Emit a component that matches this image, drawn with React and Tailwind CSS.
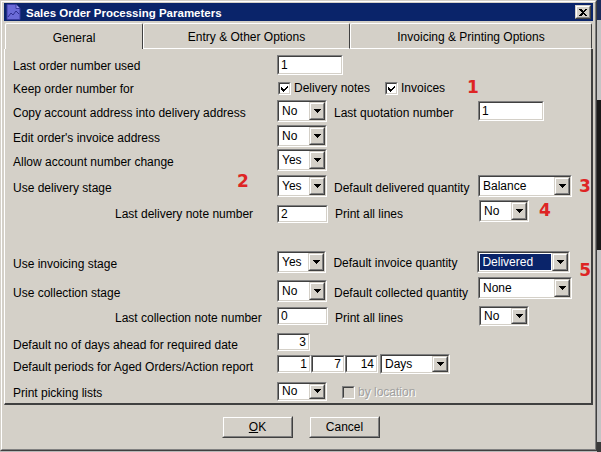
import React from "react";

const SUNKEN_OUT = "border border-t-[#808080] border-l-[#808080] border-r-white border-b-white";
const SUNKEN_IN = "border border-t-[#404040] border-l-[#404040] border-r-[#d4d0c8] border-b-[#d4d0c8]";
const RAISED_OUT = "border border-t-[#d4d0c8] border-l-[#d4d0c8] border-r-[#404040] border-b-[#404040]";
const RAISED_IN = "border border-t-white border-l-white border-r-[#808080] border-b-[#808080]";

function Arrow() {
  return (
    <svg width="7" height="4" viewBox="0 0 7 4" shapeRendering="crispEdges">
      <path d="M0 0H7L3.5 4Z" fill="#000" />
    </svg>
  );
}

function Field({ w, value, right, h = "h-[19px]" }) {
  return (
    <div className={`${SUNKEN_OUT} bg-white ${h} ${w}`}>
      <div className={`${SUNKEN_IN} h-full flex items-center px-[2px] ${right ? "justify-end" : ""}`}>
        <span className="leading-[14px]">{value}</span>
      </div>
    </div>
  );
}

function Combo({ w, h = "h-[22px]", value, selected, extra = "" }) {
  return (
    <div className={`${SUNKEN_OUT} bg-white ${w} ${h} ${extra}`}>
      <div className={`${SUNKEN_IN} h-full flex`}>
        <div className="flex-1 flex min-w-0 p-[1px]">
          <div className={`flex-1 flex items-center px-[2px] leading-[14px] ${selected ? "bg-[#0a246a] text-white" : ""}`}>
            {value}
          </div>
        </div>
        <div className={`${RAISED_OUT} w-[16px] h-full`}>
          <div className={`${RAISED_IN} h-full flex items-center justify-center bg-[#d4d0c8]`}>
            <Arrow />
          </div>
        </div>
      </div>
    </div>
  );
}

function Check({ checked, disabled }) {
  return (
    <div className={`${SUNKEN_OUT} w-[13px] h-[13px] shrink-0 ${disabled ? "bg-[#d4d0c8]" : "bg-white"}`}>
      <div className={`${SUNKEN_IN} w-full h-full flex items-center justify-center`}>
        {checked && (
          <svg width="7" height="7" viewBox="0 0 7 7" shapeRendering="crispEdges">
            <path d="M0 2L2.5 4.5L7 0V2.5L2.5 7L0 4.5Z" fill="#000" />
          </svg>
        )}
      </div>
    </div>
  );
}

function Red({ children, extra = "" }) {
  return (
    <span className={`text-[#de2424] font-bold text-[17px] leading-[17px] font-['DejaVu_Sans',sans-serif] ${extra}`}>
      {children}
    </span>
  );
}

function Tab({ label, w, selected }) {
  return (
    <div
      className={`${w} h-[26px] border-t border-l border-t-white border-l-white border-r border-r-[#404040] rounded-tl-[2px] rounded-tr-[2px] flex items-center justify-center ${
        selected ? "" : "border-b border-b-white"
      }`}
    >
      <span className="mt-[2px]">{label}</span>
    </div>
  );
}

function Label({ children, extra = "" }) {
  return <div className={`w-[264px] shrink-0 flex items-center ${extra}`}>{children}</div>;
}

function Label2({ children, extra = "" }) {
  return <div className={`w-[144px] ml-[7px] shrink-0 flex items-center ${extra}`}>{children}</div>;
}

function Button({ children }) {
  return (
    <div className={`${RAISED_OUT} w-[71px] h-[22px] bg-[#d4d0c8]`}>
      <div className={`${RAISED_IN} h-full flex items-center justify-center`}>{children}</div>
    </div>
  );
}

export default function App() {
  return (
    <div className="w-[601px] h-[452px] flex bg-[#b8b8b8] overflow-hidden font-['Liberation_Sans',Arial,sans-serif] text-[12px] text-black">
      {/* window */}
      <div className="w-[597px] h-[451px] shrink-0 border border-t-[#d4d0c8] border-l-[#d4d0c8] border-r-[#404040] border-b-[#404040] bg-[#d4d0c8]">
        <div className="h-full border border-t-white border-l-white border-r-[#808080] border-b-[#808080] pt-[1px] px-[2px] flex flex-col">
          {/* title bar */}
          <div className="h-[18px] bg-[#0a246a] flex items-center pl-[2px] pr-[2px]">
            <svg width="15" height="16" viewBox="0 0 15 16" className="shrink-0">
              <path d="M1 0.5H10L14 4.5V15.5H1Z" fill="#6b6bd8" stroke="#3a3aa0" />
              <path d="M10 0.5V4.5H14" fill="#9a9af0" stroke="#3a3aa0" />
              <path d="M2 13L5 9L7 11L10 7L13 10" fill="none" stroke="#2f2f90" strokeWidth="1" />
            </svg>
            <span className="ml-[5px] mt-[1px] text-white font-bold text-[11.5px] leading-[14px] flex-1">
              Sales Order Processing Parameters
            </span>
            <div className={`${RAISED_OUT} w-[16px] h-[14px] bg-[#d4d0c8]`}>
              <div className={`${RAISED_IN} h-full flex items-center justify-center`}>
                <svg width="8" height="7" viewBox="0 0 8 7" shapeRendering="crispEdges">
                  <path d="M0 0H2L4 2L6 0H8L5 3.5L8 7H6L4 5L2 7H0L3 3.5Z" fill="#000" />
                </svg>
              </div>
            </div>
          </div>

          {/* tabs */}
          <div className="flex mt-[2px] pl-[1px]">
            <Tab w="w-[138px]" label="General" selected />
            <Tab w="w-[207px]" label="Entry & Other Options" />
            <Tab w="w-[242px]" label="Invoicing & Printing Options" />
          </div>

          {/* panel */}
          <div className="h-[356px] border-l border-l-white border-r-2 border-r-[#404040] border-b-2 border-b-[#404040] pl-[8px] flex flex-col">
            {/* R1 */}
            <div className="flex h-[22px] mt-[5px] items-center">
              <Label extra="mt-[2px]">Last order number used</Label>
              <Field w="w-[66px]" h="h-[20px]" value="1" />
            </div>
            {/* R2 */}
            <div className="flex h-[22px] mt-[1px] items-center">
              <Label extra="mt-[1px]">Keep order number for</Label>
              <div className="flex items-center ml-[1px]">
                <Check checked />
                <span className="ml-[3px]">Delivery notes</span>
                <div className="ml-[15px]">
                  <Check checked />
                </div>
                <span className="ml-[3px]">Invoices</span>
                <Red extra="ml-[22px] mt-[-1px]">1</Red>
              </div>
            </div>
            {/* R3 */}
            <div className="flex h-[22px] mt-[1px] items-center">
              <Label extra="mt-[4px]">Copy account address into delivery address</Label>
              <Combo w="w-[50px]" value="No" />
              <Label2 extra="mt-[3px]">Last quotation number</Label2>
              <Field w="w-[66px]" h="h-[20px]" value="1" />
            </div>
            {/* R4 */}
            <div className="flex h-[22px] mt-[3px] items-center">
              <Label extra="mt-[4px]">Edit order's invoice address</Label>
              <Combo w="w-[50px]" value="No" />
            </div>
            {/* R5 */}
            <div className="flex h-[22px] mt-[2px] items-center">
              <Label extra="mt-[4px]">Allow account number change</Label>
              <Combo w="w-[50px]" value="Yes" />
            </div>
            {/* R6 */}
            <div className="flex h-[22px] mt-[4px] items-center">
              <Label extra="relative mt-[4px]">
                Use delivery stage
                <Red extra="absolute left-[224px] top-[-6px]">2</Red>
              </Label>
              <Combo w="w-[50px]" value="Yes" />
              <Label2 extra="mt-[3px]">Default delivered quantity</Label2>
              <Combo w="w-[94px]" value="Balance" />
              <Red extra="ml-[7px] mt-[1px]">3</Red>
            </div>
            {/* R7 */}
            <div className="flex h-[22px] mt-[4px] items-end">
              <Label extra="pl-[102px] h-[19px]">Last delivery note number</Label>
              <Field w="w-[51px]" h="h-[18px]" value="2" />
              <div className="h-[19px] flex">
                <Label2>Print all lines</Label2>
              </div>
              <Combo w="w-[50px]" value="No" extra="self-start -mt-[1px]" />
              <Red extra="ml-[10px] self-center -mt-[4px]">4</Red>
            </div>
            {/* R8 */}
            <div className="flex h-[22px] mt-[28px] items-center">
              <Label extra="mt-[3px]">Use invoicing stage</Label>
              <Combo w="w-[50px]" value="Yes" />
              <Label2 extra="mt-[2px]">Default invoice quantity</Label2>
              <Combo w="w-[94px]" value="Delivered" selected />
              <Red extra="ml-[9px] mt-[16px]">5</Red>
            </div>
            {/* R9 */}
            <div className="flex h-[22px] mt-[6px] items-center">
              <Label extra="mt-[6px]">Use collection stage</Label>
              <Combo w="w-[50px]" value="No" extra="mt-[2px]" />
              <Label2>
                <span className="mt-[5px]">Default collected quantity</span>
              </Label2>
              <Combo w="w-[94px]" value="None" extra="-mt-[4px]" />
            </div>
            {/* R10 */}
            <div className="flex h-[22px] mt-[4px] items-center">
              <Label extra="pl-[102px] mt-[4px]">Last collection note number</Label>
              <Field w="w-[51px]" h="h-[18px]" value="0" />
              <Label2 extra="mt-[3px]">Print all lines</Label2>
              <Combo w="w-[50px]" h="h-[20px]" value="No" />
            </div>
            {/* R11 */}
            <div className="flex h-[22px] mt-[4px] items-center">
              <Label extra="mt-[5px]">Default no of days ahead for required date</Label>
              <Field w="w-[33px]" h="h-[18px]" value="3" right />
            </div>
            {/* R12 */}
            <div className="flex h-[22px] mt-0 items-center">
              <Label extra="mt-[5px]">Default periods for Aged Orders/Action report</Label>
              <Field w="w-[34px]" h="h-[18px]" value="1" right />
              <Field w="w-[34px]" h="h-[18px]" value="7" right />
              <Field w="w-[33px]" h="h-[18px]" value="14" right />
              <Combo w="w-[70px]" h="h-[20px]" value="Days" extra="ml-[2px]" />
            </div>
            {/* R13 */}
            <div className="flex h-[22px] mt-[5px] items-center">
              <Label extra="mt-[3px]">Print picking lists</Label>
              <Combo w="w-[50px]" h="h-[19px]" value="No" />
              <div className="ml-[15px] flex items-center mt-[2px]">
                <Check disabled />
                <span className="ml-[3px] text-[#a0a0a0] [text-shadow:1px_1px_0_#ffffff]">by location</span>
              </div>
            </div>
          </div>

          {/* buttons */}
          <div className="flex mt-[11px] pl-[218px] gap-[16px]">
            <Button>
              <span>
                <span className="underline">O</span>K
              </span>
            </Button>
            <Button>Cancel</Button>
          </div>
        </div>
      </div>
      {/* background strip */}
      <div className="flex-1 flex flex-col bg-[#c4c4c4]">
        <div className="h-[20px] bg-[#1c2c5c]" />
        <div className="h-[80px]" />
        <div className="h-[150px] bg-[#1a1a1a]" />
        <div className="flex-1" />
        <div className="h-[10px] bg-[#3a3a3a]" />
      </div>
    </div>
  );
}
